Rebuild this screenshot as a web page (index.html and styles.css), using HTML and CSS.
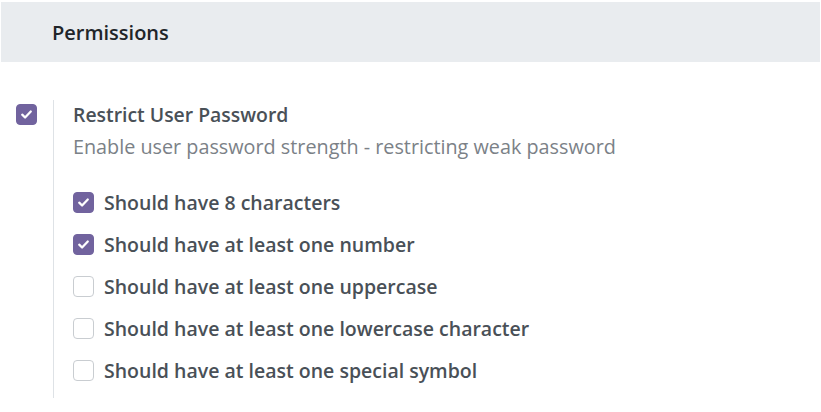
FILE: index.html
```html
<!DOCTYPE html>
<html>
<head>
<meta charset="utf-8">
<link rel="stylesheet" href="styles.css">
</head>
<body>
<div class="page">
  <div class="header"><h2 class="title">Permissions</h2></div>
  <div class="setting">
    <div class="left">
      <span class="cb checked"><svg viewBox="0 0 20 20"><path d="M5.5 10.2l3 2.9 6-6.2" /></svg></span>
    </div>
    <div class="right">
      <div class="name">Restrict User Password</div>
      <div class="desc">Enable user password strength - restricting weak password</div>
      <ul class="opts">
        <li class="opt"><span class="cb checked"><svg viewBox="0 0 20 20"><path d="M5.5 10.2l3 2.9 6-6.2" /></svg></span><span class="lbl">Should have 8 characters</span></li>
        <li class="opt"><span class="cb checked"><svg viewBox="0 0 20 20"><path d="M5.5 10.2l3 2.9 6-6.2" /></svg></span><span class="lbl">Should have at least one number</span></li>
        <li class="opt"><span class="cb"></span><span class="lbl">Should have at least one uppercase</span></li>
        <li class="opt"><span class="cb"></span><span class="lbl">Should have at least one lowercase character</span></li>
        <li class="opt"><span class="cb"></span><span class="lbl">Should have at least one special symbol</span></li>
      </ul>
    </div>
  </div>
</div>
</body>
</html>
```
FILE: styles.css
```css
html, body { margin: 0; padding: 0; background: #fff; }
body { font-family: "Open Sans", "Noto Sans", sans-serif; color: #495057; }
.page { padding: 2px 1px 0 1px; }
.header { background: #e9ecef; height: 60px; display: flex; align-items: center; padding-left: 51px; }
.title { margin: 0; font-size: 20px; font-weight: 600; color: #212529; }
.setting { display: flex; padding-top: 38px; }
.left { width: 52px; flex: none; padding-left: 15px; padding-top: 4px; box-sizing: border-box; }
.right { border-left: 1px solid #dee2e6; padding-left: 19px; padding-bottom: 12px; }
.name { font-size: 19.4px; font-weight: 600; color: #495057; line-height: 30px; }
.desc { font-size: 19.8px; color: #7b8187; line-height: 34px; }
.opts { list-style: none; margin: 23px 0 0 0; padding: 0; display: flex; flex-direction: column; gap: 11px; }
.opt { display: flex; align-items: center; height: 31px; }
.lbl { font-size: 19.5px; font-weight: 600; color: #495057; margin-left: 10px; }
.cb { width: 21px; height: 21px; flex: none; box-sizing: border-box; border: 1px solid #c9cdd1; border-radius: 4px; background: #fff; display: inline-flex; }
.cb.checked { background: #71639e; border-color: #71639e; }
.cb svg { width: 100%; height: 100%; fill: none; stroke: #fff; stroke-width: 2.4; stroke-linecap: round; stroke-linejoin: round; }
```
